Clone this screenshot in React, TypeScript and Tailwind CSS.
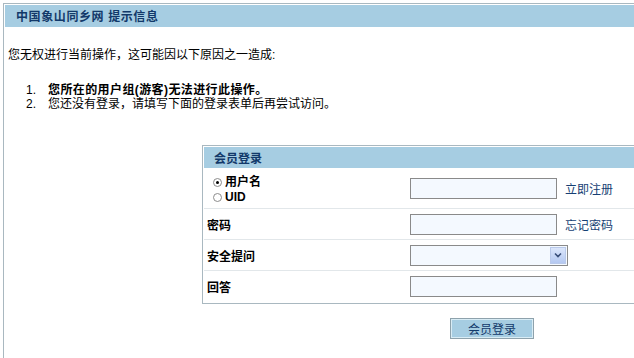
import React from "react";

function Radio({ checked }: { checked?: boolean }) {
  return (
    <span className="inline-flex w-[9px] h-[9px] rounded-full border border-[#8c8c8c] bg-white items-center justify-center mr-[3px]">
      {checked ? <span className="w-[3px] h-[3px] rounded-full bg-black" /> : null}
    </span>
  );
}

function TextBox() {
  return <div className="w-[147px] h-[21px] border border-[#8a8a8a] bg-[#f4f9ff]" />;
}

export default function App() {
  return (
    <div className="w-[634px] h-[358px] overflow-hidden bg-white text-[12px] text-black font-['Liberation_Sans','Noto_Sans_CJK_SC',sans-serif]">
      <div className="ml-[3px] mt-[3px] w-[720px] h-[420px] border border-[#a9b8c0] p-px">
        <div className="h-[22px] bg-[#a6cde2] pl-[11px] pt-[2px] flex items-center font-bold text-[#12396a] leading-[14px] tracking-[0.6px]">
          中国象山同乡网 提示信息
        </div>
        <div className="pl-[3px]">
          <p className="mt-[21px] leading-[14px]">您无权进行当前操作，这可能因以下原因之一造成:</p>
          <div className="mt-[21px] ml-[18px] leading-[14px]">
            <div className="flex">
              <span className="w-[22px]">1.</span>
              <span className="font-bold tracking-[0.4px]">您所在的用户组(游客)无法进行此操作。</span>
            </div>
            <div className="flex">
              <span className="w-[22px]">2.</span>
              <span>您还没有登录，请填写下面的登录表单后再尝试访问。</span>
            </div>
          </div>

          <div className="ml-[194px] mt-[34px] w-[580px]">
            <div className="border border-[#a9b8c0] p-px">
              <div className="h-[21px] bg-[#a6cde2] pl-[10px] pt-[2px] flex items-center font-bold text-[#12396a] leading-[14px]">
                会员登录
              </div>
              <div className="flex h-[41px] border-b border-[#e2e7ea]">
                <div className="w-[206px] pl-[9px] pt-[3px] flex flex-col justify-center font-bold leading-[15px]">
                  <div className="flex items-center"><Radio checked />用户名</div>
                  <div className="flex items-center"><Radio />UID</div>
                </div>
                <div className="flex items-center">
                  <TextBox />
                  <span className="ml-[8px] pt-[3px] text-[#173f74]">立即注册</span>
                </div>
              </div>
              <div className="flex h-[31px] border-b border-[#e2e7ea]">
                <div className="w-[206px] pl-[3px] pt-[3px] flex items-center font-bold">密码</div>
                <div className="flex items-center">
                  <TextBox />
                  <span className="ml-[8px] pt-[3px] text-[#173f74]">忘记密码</span>
                </div>
              </div>
              <div className="flex h-[31px] border-b border-[#e2e7ea]">
                <div className="w-[206px] pl-[3px] pt-[3px] flex items-center font-bold">安全提问</div>
                <div className="flex items-center">
                  <div className="w-[158px] h-[21px] border border-[#8a8a8a] bg-[#f4f9ff] flex justify-end items-center pr-px">
                    <div className="w-[16px] h-[17px] bg-gradient-to-b from-[#dbe6fb] to-[#b4c8f1] border border-[#b9c9ea] flex items-center justify-center">
                      <svg width="8" height="6" viewBox="0 0 8 6">
                        <path d="M1 1.5 L4 4.5 L7 1.5" fill="none" stroke="#3a4f7a" strokeWidth="1.6" />
                      </svg>
                    </div>
                  </div>
                </div>
              </div>
              <div className="flex h-[31px]">
                <div className="w-[206px] pl-[3px] pt-[3px] flex items-center font-bold">回答</div>
                <div className="flex items-center">
                  <TextBox />
                </div>
              </div>
            </div>
            <div className="flex justify-center mt-[14px]">
              <div className="w-[84px] h-[21px] pt-[2px] border border-[#8ea2ac] bg-[#a6cde2] shadow-[inset_0_0_0_1px_#d8ecf5] flex items-center justify-center text-[#12396a] leading-[14px]">
                会员登录
              </div>
            </div>
          </div>
        </div>
      </div>
    </div>
  );
}
